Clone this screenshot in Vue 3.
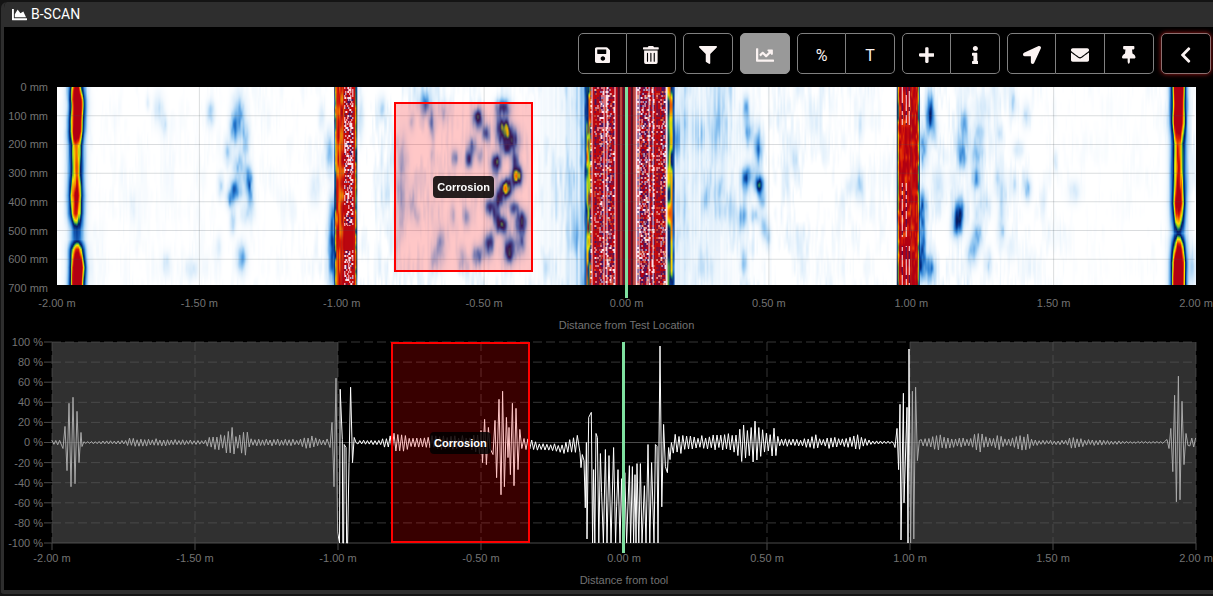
<script setup>
import {onMounted, ref} from "vue";

const GRID_W = 1138
const GRID_H = 198

const icons = {
  area: {box: "0 0 512 512", d: "M500 384c6.6 0 12 5.4 12 12v40c0 6.6-5.4 12-12 12H12c-6.6 0-12-5.4-12-12V76c0-6.6 5.4-12 12-12h40c6.6 0 12 5.4 12 12v308h436zM372.7 159.5L288 216l-85.3-113.7c-5.1-6.8-15.5-6.3-19.9 1L96 248v104h384l-89.9-187.8c-3.2-6.5-11.4-8.7-17.4-4.7z"},
  save: {box: "0 0 448 512", d: "M433.941 129.941l-83.882-83.882A48 48 0 0 0 316.118 32H48C21.49 32 0 53.49 0 80v352c0 26.51 21.49 48 48 48h352c26.51 0 48-21.49 48-48V163.882a48 48 0 0 0-14.059-33.941zM224 416c-35.346 0-64-28.654-64-64 0-35.346 28.654-64 64-64s64 28.654 64 64c0 35.346-28.654 64-64 64zm96-304.52V212c0 6.627-5.373 12-12 12H76c-6.627 0-12-5.373-12-12V108c0-6.627 5.373-12 12-12h228.52c3.183 0 6.235 1.264 8.485 3.515l3.48 3.48A11.996 11.996 0 0 1 320 111.48z"},
  trash: {box: "0 0 448 512", d: "M32 464a48 48 0 0 0 48 48h288a48 48 0 0 0 48-48V128H32zm272-256a16 16 0 0 1 32 0v224a16 16 0 0 1-32 0zm-96 0a16 16 0 0 1 32 0v224a16 16 0 0 1-32 0zm-96 0a16 16 0 0 1 32 0v224a16 16 0 0 1-32 0zM432 32H312l-9.4-18.7A24 24 0 0 0 281.1 0H166.8a23.72 23.72 0 0 0-21.4 13.3L136 32H16A16 16 0 0 0 0 48v32a16 16 0 0 0 16 16h416a16 16 0 0 0 16-16V48a16 16 0 0 0-16-16z"},
  filter: {box: "0 0 512 512", d: "M487.976 0H24.028C2.71 0-8.047 25.866 7.058 40.971L192 225.941V432c0 7.831 3.821 15.17 10.237 19.662l80 55.98C298.02 518.69 320 507.493 320 487.98V225.941l184.947-184.97C520.021 25.896 509.338 0 487.976 0z"},
  line: {box: "0 0 512 512", d: "M496 384H64V80c0-8.84-7.16-16-16-16H16C7.16 64 0 71.16 0 80v336c0 17.67 14.33 32 32 32h464c8.84 0 16-7.16 16-16v-32c0-8.84-7.16-16-16-16zM464 96H345.94c-21.38 0-32.09 25.85-16.97 40.97l32.4 32.4L288 242.75l-73.37-73.37c-12.5-12.5-32.76-12.5-45.25 0l-68.69 68.69c-6.25 6.25-6.25 16.38 0 22.63l22.62 22.62c6.25 6.25 16.38 6.25 22.63 0L192 237.25l73.37 73.37c12.5 12.5 32.76 12.5 45.25 0l96-96 32.4 32.4c15.12 15.12 40.97 4.41 40.97-16.97V112c.01-8.84-7.15-16-15.99-16z"},
  plus: {box: "0 0 448 512", d: "M416 208H272V64c0-17.67-14.33-32-32-32h-32c-17.67 0-32 14.33-32 32v144H32c-17.67 0-32 14.33-32 32v32c0 17.67 14.33 32 32 32h144v144c0 17.67 14.33 32 32 32h32c17.67 0 32-14.33 32-32V304h144c17.67 0 32-14.33 32-32v-32c0-17.67-14.33-32-32-32z"},
  info: {box: "0 0 192 512", d: "M20 424.229h20V279.771H20c-11.046 0-20-8.954-20-20V212c0-11.046 8.954-20 20-20h112c11.046 0 20 8.954 20 20v212.229h20c11.046 0 20 8.954 20 20V492c0 11.046-8.954 20-20 20H20c-11.046 0-20-8.954-20-20v-47.771c0-11.046 8.954-20 20-20zM96 0C56.235 0 24 32.235 24 72s32.235 72 72 72 72-32.235 72-72S135.764 0 96 0z"},
  arrow: {box: "0 0 512 512", d: "M444.52 3.52L28.74 195.42c-47.97 22.39-31.98 92.75 19.19 92.75h175.91v175.91c0 51.17 70.36 67.17 92.75 19.19l191.9-415.78c15.99-38.39-25.59-79.97-63.97-63.97z"},
  mail: {box: "0 0 512 512", d: "M502.3 190.8c3.9-3.1 9.7-.2 9.7 4.7V400c0 26.5-21.5 48-48 48H48c-26.5 0-48-21.5-48-48V195.6c0-5 5.7-7.8 9.7-4.7 22.4 17.4 52.1 39.5 154.1 113.6 21.1 15.4 56.7 47.8 92.2 47.6 35.7.3 72-32.8 92.3-47.6 102-74.1 131.6-96.3 154-113.7zM256 320c23.2.4 56.6-29.2 73.4-41.4 132.7-96.3 142.8-104.7 173.4-128.7 5.8-4.5 9.2-11.5 9.2-18.9v-19c0-26.5-21.5-48-48-48H48c-26.5 0-48 21.5-48 48v19c0 7.4 3.4 14.3 9.2 18.9 30.6 23.9 40.7 32.4 173.4 128.7 16.8 12.2 50.2 41.8 73.4 41.4z"},
  pin: {box: "0 0 384 512", d: "M298.028 214.267L285.793 96H328c13.255 0 24-10.745 24-24V24c0-13.255-10.745-24-24-24H56C42.745 0 32 10.745 32 24v48c0 13.255 10.745 24 24 24h42.207L85.972 214.267C37.465 236.82 0 277.261 0 328c0 13.255 10.745 24 24 24h136v104.007c0 1.242.289 2.467.845 3.578l24 48c2.941 5.882 11.364 5.893 14.311 0l24-48a8.008 8.008 0 0 0 .845-3.578V352h136c13.255 0 24-10.745 24-24-.001-51.183-37.983-91.42-85.973-113.733z"},
  back: {box: "0 0 320 512", d: "M34.52 239.03L228.87 44.69c9.37-9.37 24.57-9.37 33.94 0l22.67 22.67c9.36 9.36 9.37 24.52.04 33.9L131.49 256l154.02 154.75c9.34 9.38 9.32 24.54-.04 33.9l-22.67 22.67c-9.37 9.37-24.57 9.37-33.94 0L34.52 272.97c-9.37-9.37-9.37-24.57 0-33.94z"}
}

const groups = [
  [{icon: "save", label: "Save"}, {icon: "trash", label: "Delete"}],
  [{icon: "filter", label: "Filter"}],
  [{icon: "line", label: "A-scan", toggle: true}],
  [{text: "%", label: "Percent"}, {text: "T", label: "Text"}],
  [{icon: "plus", label: "Add"}, {icon: "info", label: "Info"}],
  [{icon: "arrow", label: "Go to location"}, {icon: "mail", label: "Send"}, {icon: "pin", label: "Pin"}],
  [{icon: "back", label: "Back", glow: true}]
]

const showLine = ref(true)
const canvas = ref(null)

const xLabels = ["-2.00 m", "-1.50 m", "-1.00 m", "-0.50 m", "0.00 m", "0.50 m", "1.00 m", "1.50 m", "2.00 m"]
const depthLabels = [0, 100, 200, 300, 400, 500, 600, 700].map(v => v + " mm")
const percents = [100, 80, 60, 40, 20, 0, -20, -40, -60, -80, -100]

// corrosion region, metres from the tool and mm of depth
const region = {name: "Corrosion", from: -0.816, to: -0.328, top: 52, bottom: 645}

const toPct = (m) => (m + 2) / 4 * 100 + "%"
const regionX = {left: toPct(region.from), width: (region.to - region.from) / 4 * 100 + "%"}
const regionScan = {
  ...regionX,
  top: region.top / 7 + "%",
  height: (region.bottom - region.top) / 7 + "%"
}
const markerX = {left: toPct(0)}

function hash(x, y) {
  let h = Math.imul(x | 0, 374761393) + Math.imul(y | 0, 668265263)
  h = Math.imul(h ^ (h >>> 13), 1274126177)
  return ((h ^ (h >>> 16)) >>> 0) / 4294967295
}

function noise(x, y) {
  const xi = Math.floor(x), yi = Math.floor(y)
  const fx = x - xi, fy = y - yi
  const sx = fx * fx * (3 - 2 * fx), sy = fy * fy * (3 - 2 * fy)
  const a = hash(xi, yi), b = hash(xi + 1, yi), c = hash(xi, yi + 1), d = hash(xi + 1, yi + 1)
  return (a + (b - a) * sx) * (1 - sy) + (c + (d - c) * sx) * sy
}

// linear interpolation in a table of [x, value]
function lerp(table, x) {
  if (x <= table[0][0]) return table[0][1]
  for (let i = 1; i < table.length; i++) {
    if (x <= table[i][0]) {
      const [x0, v0] = table[i - 1], [x1, v1] = table[i]
      return v0 + (v1 - v0) * (x - x0) / (x1 - x0)
    }
  }
  return table[table.length - 1][1]
}

const palette = [
  [0, 255, 255, 255], [0.1, 212, 233, 250], [0.2, 140, 195, 240], [0.32, 45, 130, 212],
  [0.42, 5, 60, 150], [0.5, 8, 25, 95], [0.56, 10, 110, 110], [0.62, 130, 200, 40],
  [0.7, 250, 225, 0], [0.8, 245, 130, 0], [0.9, 220, 30, 5], [1, 178, 0, 18]
]

function color(v) {
  v = Math.min(1, Math.max(0, v))
  let i = 1
  while (palette[i][0] < v) i++
  const a = palette[i - 1], b = palette[i]
  const t = (v - a[0]) / (b[0] - a[0])
  return [1, 2, 3].map(k => a[k] + (b[k] - a[k]) * t)
}

// echoes: x, y, radius x, radius y, amplitude
const echoes = [
  [101, 22, 5, 15, .11], [107, 38, 3, 10, .1], [153, 26, 4, 12, .16], [90, 14, 2, 8, .06],
  [181, 28, 6, 20, .25], [176, 42, 4, 14, .22], [188, 52, 4, 16, .18], [170, 66, 3, 12, .15], [181, 78, 6, 14, .18],
  [191, 93, 4, 14, .34], [178, 102, 6, 11, .32], [173, 112, 4, 9, .22], [163, 98, 3, 12, .13], [193, 112, 4, 12, .16],
  [175, 134, 3, 12, .16], [189, 128, 7, 10, .09], [184, 170, 5, 14, .24], [161, 160, 3, 12, .08], [109, 177, 4, 12, .1],
  [134, 182, 6, 10, .09], [75, 120, 3, 14, .05], [257, 102, 5, 16, .08],
  [272, 65, 4, 20, .22], [275, 130, 4, 26, .22], [275, 170, 5, 34, .36], [264, 30, 3, 14, .09], [303, 30, 3, 20, .12],
  [324, 22, 4, 12, .15], [368, 16, 5, 12, .24], [374, 36, 3, 14, .24], [386, 24, 4, 12, .16], [354, 34, 3, 10, .13],
  [420, 31, 5, 10, .42], [428, 46, 4, 9, .4], [414, 58, 4, 10, .3], [422, 68, 4, 10, .2], [411, 72, 4, 9, .4],
  [397, 70, 4, 9, .22], [374, 68, 2, 8, .12], [446, 20, 7, 9, .38], [447, 43, 6, 11, .6], [456, 52, 6, 12, .36],
  [448, 60, 6, 10, .34], [438, 76, 5, 10, .5], [441, 40, 5, 16, .18], [457, 72, 4, 8, .3], [448, 101, 6, 9, .78],
  [459, 88, 5, 10, .78], [441, 112, 5, 9, .4], [432, 120, 5, 9, .4], [463, 134, 6, 11, .52], [444, 138, 6, 9, .5],
  [438, 128, 4, 9, .3], [456, 120, 5, 7, .36], [452, 162, 6, 13, .58], [431, 157, 5, 12, .46], [420, 168, 5, 10, .32],
  [464, 156, 4, 12, .32], [383, 158, 5, 18, .22], [376, 172, 3, 12, .16], [345, 76, 5, 30, .13], [343, 110, 5, 20, .17],
  [354, 115, 4, 18, .13], [360, 130, 3, 10, .12], [395, 128, 3, 12, .18], [409, 130, 4, 10, .22], [404, 170, 4, 12, .14],
  [344, 140, 3, 14, .1], [688, 20, 3, 12, .24], [690, 44, 4, 14, .22], [700, 60, 4, 20, .24], [688, 92, 4, 12, .36],
  [701, 97, 5, 9, .46], [704, 112, 4, 10, .2], [694, 84, 5, 10, .12], [684, 130, 4, 12, .2], [697, 128, 5, 8, .14],
  [706, 138, 4, 12, .16], [686, 176, 3, 12, .2], [648, 112, 3, 12, .14], [662, 102, 4, 14, .13], [710, 150, 3, 12, .12],
  [664, 20, 4, 14, .08], [801, 100, 4, 14, .14], [791, 100, 4, 10, .08], [802, 38, 2, 14, .1], [736, 74, 3, 14, .1],
  [728, 90, 3, 16, .1], [872, 24, 4, 18, .38], [875, 42, 5, 14, .13], [865, 62, 5, 20, .22], [864, 120, 4, 18, .26],
  [880, 100, 6, 22, .11], [864, 158, 4, 26, .34], [872, 182, 5, 14, .32], [862, 180, 4, 14, .24], [906, 36, 4, 14, .26],
  [904, 58, 6, 14, .14], [904, 72, 4, 12, .18], [921, 44, 6, 12, .16], [920, 66, 6, 12, .18], [923, 20, 11, 14, .06],
  [918, 91, 4, 10, .26], [901, 126, 5, 16, .44], [898, 140, 5, 12, .2], [919, 148, 5, 14, .24], [914, 165, 5, 13, .2],
  [944, 112, 4, 22, .13], [943, 145, 4, 14, .13], [930, 175, 4, 14, .1], [938, 92, 3, 14, .1], [955, 16, 3, 12, .13],
  [968, 28, 4, 12, .11], [969, 101, 4, 12, .18], [956, 97, 3, 10, .08], [960, 62, 5, 9, .1], [997, 74, 2, 10, .1],
  [1016, 104, 6, 11, .09], [942, 46, 3, 9, .11], [953, 160, 4, 12, .08], [895, 92, 5, 14, .06], [925, 118, 8, 14, .08],
  [985, 112, 3, 14, .06], [1134, 178, 3, 18, .14]
]

// strength of the streaky background along the x axis
const haze = [
  [0, .04], [40, .06], [120, .06], [240, .08], [262, .14], [300, .16], [340, .26], [440, .2], [470, .16], [500, .22],
  [526, .3], [616, .3], [640, .26], [700, .22], [740, .17], [830, .09], [862, .2], [920, .16], [960, .12], [1010, .06],
  [1080, .04], [1138, .12]
]

const leftWeld = [[0, .95], [12, 1.3], [44, 1.2], [58, .8], [88, .78], [108, 1.04], [126, .86], [142, .42], [152, .4], [162, .95], [180, 1.45], [198, 1.3]]
const rightWeld = [[0, 1.4], [36, 1.3], [56, .88], [86, .9], [116, 1.1], [134, .74], [146, .46], [156, .85], [175, 1.45], [198, 1.45]]

function weld(x, centre, width, strength) {
  const d = (x - centre) / width
  return strength * Math.exp(-d * d)
}

function amplitude(x, y) {
  const streak = noise(x / 1.5, y / 18) * .6 + noise(x / 5 + 90, y / 30) * .4
  const cloud = noise(x / 14 + 40, y / 30 + 7)
  let v = lerp(haze, x) * Math.max(0, streak * .8 + cloud * .5 - .62)

  for (const [ex, ey, rx, ry, a] of echoes) {
    const dx = (x - ex) / rx, dy = (y - ey) / ry
    const d = dx * dx + dy * dy
    if (d < 5) v += a * Math.exp(-d) * (.75 + .5 * noise(x / 2, y / 9))
  }

  // ringing on both sides of the test location
  if (x > 460 && x < 528) v += .22 * ((x - 460) / 68) ** 2 * (.1 + hash(x, 3)) * (.7 + noise(x / 4, y / 60) * .5)
  if (x > 616 && x < 710) {
    const band = .35 + .7 * Math.exp(-(((y - 44) / 22) ** 2)) + .25 * Math.exp(-(((y - 112) / 34) ** 2))
    v += .28 * (1 - (x - 616) / 94) * (.25 + hash(x, 5) * .8) * band * (.6 + noise(x / 5, y / 24) * .5)
  }

  const wobble = noise(3, y / 18) * 3 - 1
  v += weld(x, 19 + wobble * .6, 7, lerp(leftWeld, y)) * (.9 + .2 * noise(x / 1.5, y / 16))
  v += weld(x, 1120, 6.6, lerp(rightWeld, y)) * (.9 + .2 * noise(x / 1.5, y / 16))
  return v
}

const WHITE = [250, 225, 235]
const NAVY = [72, 20, 96]

function saturated(x, y) {
  // weld at -1.00 m
  if (x >= 277 && x <= 299) {
    const edge = Math.min(x - 276, 300 - x)
    if (edge < 2) return color(.34 + noise(x, y / 14) * .2)
    if (edge < 3) return color(.5 + noise(x, y / 8) * .3)
    if (x < 287) return color(.76 + noise(x / 1.3, y / 12) * .28)
    const n = hash(x, y >> 1)
    if (y > 138 && y < 163 && x < 296) return color(.98)
    if (x > 295) return color(.95)
    return n > .62 ? WHITE : n > .5 ? NAVY : color(.97)
  }
  // weld at 1.00 m
  if (x >= 839 && x <= 861) {
    const edge = Math.min(x - 838, 862 - x)
    if (edge < 2) return color(.36 + noise(x, y / 20) * .2)
    if (edge < 3) return color(.55 + noise(x, y / 10) * .3)
    const ends = y < 38 || y > 158
    if ((x === 844 || x === 848 || x === 851) && (ends || (y > 95 && y < 150 && x < 850))) return hash(x, y >> 2) > .25 ? WHITE : NAVY
    return color(.84 + noise(x / 1.2, y / 7) * .26)
  }
  // probe position
  if (x >= 527 && x <= 616) {
    if (x < 529 || x > 614) return color(.3 + noise(x, y / 12) * .14)
    if (x < 533) return color(.4 + noise(x, y / 14) * .5)
    if (x > 609) return color(.4 + noise(x / 1.5, y / 18) * .45)
    const column = hash(x, 77)
    if (x > 558 && x < 578) {
      if (x === 561 || x === 566 || x === 574) return [28, 20, 40]
      if (x === 563 || x === 576) return [190, 150, 110]
      return column > .8 ? [120, 20, 50] : color(1)
    }
    const n = hash(x, y >> 1)
    if (column > .9) return WHITE
    if (column < .26) return color(.96)
    if (n > .82) return WHITE
    if (n > .5) return NAVY
    if (n > .4) return [215, 110, 70]
    return color(.99)
  }
  return null
}

function drawScan() {
  const ctx = canvas.value.getContext("2d")
  const image = ctx.createImageData(GRID_W, GRID_H)
  for (let y = 0; y < GRID_H; y++) {
    for (let x = 0; x < GRID_W; x++) {
      const [r, g, b] = saturated(x, y) || color(amplitude(x, y))
      const i = (y * GRID_W + x) * 4
      image.data[i] = r
      image.data[i + 1] = g
      image.data[i + 2] = b
      image.data[i + 3] = 255
    }
  }
  ctx.putImageData(image, 0, 0)
}

// strong echoes of the A-scan, x on a 1144 wide axis, value in percent
const bursts = [
  [[11, -6], [13, 16], [15, -28], [17, 39], [19, -44], [21, 45], [23, -41], [25, 31], [27, -20], [29, 10], [30, -4]],
  [[278, -5], [280, 20], [282, -44], [284, 64], [285.6, -89], [287.5, -100], [288.2, 53], [290.3, 3], [290.8, -100], [291.6, -100],
    [292.2, -2], [294, -5], [294.6, -100], [295.6, -100], [297, -20], [298.6, 55], [300.5, -20], [302.2, 5], [304, 0]],
  [[429, 12], [430.5, -20], [432.6, 23], [434.4, -22], [436.4, 15], [438, -6], [441, -12], [443, 22], [444.6, -35], [447, 43], [449, -52],
    [450.6, 51], [452.4, -44], [454.4, 25], [456, -15], [457, 15], [458.4, -32], [460.4, 39], [462, -43], [464, 34], [466, -27],
    [467.8, 13], [469.8, -6], [472, 4], [474, -7]],
  [[528, -10], [529, -25], [530.3, -12], [532, -18], [533.3, -65], [534.4, 0], [535, -96], [536.7, 25], [539.3, 30], [540.6, -100],
    [541.6, -27], [542.8, -100], [544, 9], [545.4, 5], [546.8, -100], [548.4, -11], [549.6, -50], [551.4, -100], [553.4, -7],
    [555, -100], [557, -13], [559, -100], [561.6, -5], [563.6, -100], [564.6, -64], [566, -27], [568, -100], [569.6, -36], [571, -100],
    [572.8, -30], [574.6, -100], [577.4, -23], [578.6, -100], [580.4, -24], [581.6, -100], [583, -32], [584, -100], [585, -21],
    [586.8, -100], [588.4, -21], [590, -100], [592.4, -43], [594, -100], [596, -2], [597.8, -100], [599.6, -20], [602, -100],
    [603.4, -2], [605, -4], [606, -100], [608, 96], [609.8, -64], [611.6, 18], [613.4, -24], [615.4, -30], [616.6, -5], [618, -17], [619.4, 0]],
  [[843, -5], [845, 14], [846.6, -27], [848, 38], [849, -97], [851.4, 49], [852, -60], [855, 35], [856, -100], [857, 93], [858.6, -100],
    [860.4, 51], [861.8, -96], [863.6, 55], [865.4, -18], [867.4, 2]],
  [[1115, 3], [1117, -6], [1118.8, 14], [1120.8, -29], [1122.6, 47], [1124.4, -59], [1126.4, 66], [1128, -57], [1130, 41], [1132, -22], [1134, 9], [1136, -3]]
]

const ripple = [
  [0, 2], [11, 3], [32, 1], [73, 2], [78, 4], [118, 3], [153, 2], [159, 6], [163, 7], [172, 7], [175, 14], [180, 15], [184, 6],
  [192, 15], [198, 4], [218, 3], [248, 3], [256, 6], [262, 6], [268, 3], [278, 4], [303, 2], [328, 2], [336, 6], [348, 10],
  [360, 4], [378, 6], [398, 6], [418, 6], [428, 10], [478, 5], [488, 3], [510, 4], [518, 7], [526, 10], [622, 9], [648, 6],
  [673, 7], [683, 9], [691, 18], [696, 11], [703, 25], [707, 17], [713, 9], [723, 13], [728, 4], [748, 3], [765, 7], [770, 3],
  [778, 6], [788, 3], [806, 7], [818, 2], [842, 1], [868, 2], [883, 8], [895, 6], [903, 4], [918, 4], [925, 10], [938, 4],
  [948, 7], [956, 3], [975, 9], [981, 3], [993, 2], [1013, 2], [1021, 6], [1033, 3], [1058, 2], [1078, 1], [1114, 1], [1137, 4], [1144, 4]
]
const drift = [[0, 0], [470, 0], [485, -4], [510, -6], [526, -3], [622, -2], [650, 0], [1144, 0]]

function buildTrace() {
  const points = []
  let x = 0
  let sign = 1
  for (const burst of [...bursts, [[1145, 0]]]) {
    while (x < burst[0][0] - 1) {
      const swing = lerp(ripple, x) * (.7 + .45 * hash(x * 3, 11))
      points.push([x, lerp(drift, x) + sign * swing])
      sign = -sign
      x += 1.9
    }
    points.push(...burst)
    x = burst[burst.length - 1][0] + 1.9
  }
  return points.filter(p => p[0] <= 1144).map(([px, v]) => px.toFixed(1) + "," + (100 - v).toFixed(1)).join(" ")
}

const trace = buildTrace()

onMounted(drawScan)
</script>

<template>
  <section class="panel">
    <header class="panel-header">
      <svg class="title-icon" :viewBox="icons.area.box" aria-hidden="true"><path :d="icons.area.d"/></svg>
      <h1>B-SCAN</h1>
    </header>

    <div class="toolbar">
      <div v-for="(group, i) in groups" :key="i" class="btn-group">
        <button v-for="btn in group"
                :key="btn.label"
                type="button"
                class="btn"
                :class="{active: btn.toggle && showLine, glow: btn.glow}"
                :aria-label="btn.label"
                @click="btn.toggle && (showLine = !showLine)">
          <svg v-if="btn.icon" :viewBox="icons[btn.icon].box" aria-hidden="true"><path :d="icons[btn.icon].d"/></svg>
          <span v-else>{{ btn.text }}</span>
        </button>
      </div>
    </div>

    <div class="chart scan">
      <div class="y-axis">
        <span v-for="label in depthLabels" :key="label">{{ label }}</span>
      </div>
      <div class="plot">
        <canvas ref="canvas" :width="GRID_W" :height="GRID_H"></canvas>
        <svg class="layer" viewBox="0 0 800 700" preserveAspectRatio="none">
          <line v-for="n in 6" :key="'h' + n" x1="0" x2="799" :y1="n * 100" :y2="n * 100" class="scan-grid"/>
          <line v-for="n in 7" :key="'v' + n" :x1="n * 100" :x2="n * 100" y1="0" y2="690" class="scan-grid"/>
        </svg>
        <div class="region" :style="regionScan"><span class="tag">{{ region.name }}</span></div>
        <div class="marker" :style="markerX"></div>
      </div>
      <div class="x-axis">
        <span v-for="label in xLabels" :key="label">{{ label }}</span>
      </div>
      <p class="axis-title">Distance from Test Location</p>
    </div>

    <div class="chart trace">
      <div class="y-axis">
        <span v-for="p in percents" :key="p">{{ p }} %</span>
      </div>
      <div class="plot">
        <svg class="layer" viewBox="0 0 1144 200" preserveAspectRatio="none">
          <g class="trace-grid">
            <line v-for="n in 11" :key="'h' + n" x1="0" x2="1144" :y1="(n - 1) * 20" :y2="(n - 1) * 20"
                  :class="{solid: n === 6 || n === 11}"/>
            <line v-for="n in 11" :key="'t' + n" x1="-8" x2="0" :y1="(n - 1) * 20" :y2="(n - 1) * 20" class="solid"/>
            <line v-for="n in 9" :key="'v' + n" :x1="(n - 1) * 143" :x2="(n - 1) * 143" y1="0" y2="200"/>
            <line v-for="n in 9" :key="'b' + n" :x1="(n - 1) * 143" :x2="(n - 1) * 143" y1="200" y2="207" class="solid"/>
          </g>
          <polyline v-if="showLine" :points="trace" class="signal"/>
          <rect x="0" y="0" width="286" height="200" class="outside"/>
          <rect x="858" y="0" width="286" height="200" class="outside"/>
        </svg>
        <div class="region" :style="regionX"><span class="tag">{{ region.name }}</span></div>
        <div class="marker" :style="markerX"></div>
      </div>
      <div class="x-axis">
        <span v-for="label in xLabels" :key="label">{{ label }}</span>
      </div>
      <p class="axis-title">Distance from tool</p>
    </div>
  </section>
</template>

<style>
body {
  background: #141414;
  overflow: hidden;
}
</style>

<style scoped>
.panel {
  box-sizing: border-box;
  margin: 2px 0 0 1px;
  border-left: 3px solid #2e2e2e;
  border-bottom: 4px solid #2e2e2e;
  border-radius: 6px 0 0 3px;
  background: #000;
  overflow: hidden;
  font-family: "Liberation Sans", Arial, sans-serif;
}

.panel-header {
  display: flex;
  align-items: center;
  gap: 4px;
  height: 25px;
  padding-left: 8px;
  background: #2e2e2e;
  color: #fff;
}

.panel-header h1 {
  margin: 0;
  font: 400 14px/27px Roboto, sans-serif;
}

.title-icon {
  width: 15px;
  height: 15px;
  fill: #fff;
}

.toolbar {
  display: flex;
  justify-content: flex-end;
  gap: 7px;
  padding: 6px 2px 13px;
}

.btn-group {
  display: flex;
}

.btn {
  box-sizing: border-box;
  display: flex;
  align-items: center;
  justify-content: center;
  width: 49px;
  height: 41px;
  padding: 3px 0 0;
  border: 1px solid #808080;
  background: #000;
  color: #fbf3f2;
  font: 16px Roboto, sans-serif;
  cursor: pointer;
}

.btn:only-child {
  width: 50px;
}

.btn + .btn {
  border-left: 0;
}

.btn:first-child {
  border-top-left-radius: 5px;
  border-bottom-left-radius: 5px;
}

.btn:last-child {
  border-top-right-radius: 5px;
  border-bottom-right-radius: 5px;
}

.btn svg {
  height: 18px;
  fill: currentColor;
}

.btn.active {
  background: #999;
  border-color: #999;
}

.btn.glow {
  border-color: #8c7070;
  box-shadow: 0 0 5px #a01818;
}

.chart {
  display: grid;
  padding-right: 17px;
  color: #737373;
  font-size: 11px;
}

.scan {
  grid-template: 201px 30px 15px / 53px minmax(0, 1fr);
}

.trace {
  grid-template: 201px 30px 15px / 48px minmax(0, 1fr);
  padding-top: 9px;
  padding-bottom: 2px;
}

.y-axis {
  display: flex;
  flex-direction: column;
  justify-content: space-between;
  padding-right: 9px;
  text-align: right;
}

.y-axis span {
  height: 0;
  line-height: 0;
  white-space: nowrap;
}

.plot {
  position: relative;
}

.plot canvas {
  display: block;
  width: 100%;
  height: 198px;
}

.layer {
  position: absolute;
  inset: 0;
  width: 100%;
  height: 100%;
  overflow: visible;
}

.scan-grid {
  stroke: rgba(70, 80, 90, 0.2);
  vector-effect: non-scaling-stroke;
}

.trace-grid line {
  stroke: #363636;
  stroke-dasharray: 9 4;
  vector-effect: non-scaling-stroke;
}

.trace-grid .solid {
  stroke: #4a4a4a;
  stroke-dasharray: none;
}

.signal {
  fill: none;
  stroke: #fff;
  vector-effect: non-scaling-stroke;
}

.outside {
  fill: rgba(90, 90, 90, 0.53);
}

.region {
  position: absolute;
  box-sizing: border-box;
  display: flex;
  align-items: center;
  justify-content: center;
  border: 2px solid #f00;
  background: rgba(255, 0, 0, 0.22);
}

.trace .region {
  top: 0;
  bottom: 0;
}

.tag {
  padding: 0 4px;
  border-radius: 4px;
  background: rgba(0, 0, 0, 0.85);
  color: #fff;
  font-size: 11px;
  font-weight: bold;
  line-height: 22px;
}

.marker {
  position: absolute;
  top: 0;
  bottom: -10px;
  width: 3px;
  margin-left: -2px;
  background: #7fe0a0;
}

.x-axis {
  grid-column: 2;
  display: flex;
  justify-content: space-between;
  line-height: 30px;
}

.x-axis span {
  display: flex;
  justify-content: center;
  width: 0;
  white-space: nowrap;
}

.axis-title {
  grid-column: 2;
  margin: 0;
  line-height: 15px;
  text-align: center;
}
</style>
